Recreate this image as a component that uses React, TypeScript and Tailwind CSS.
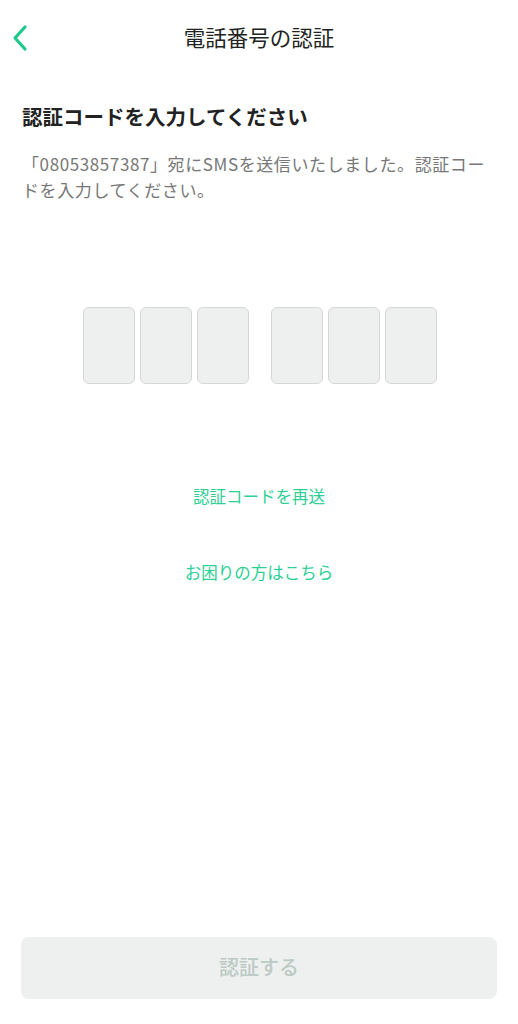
import React from "react";

export default function App() {
  const font = { fontFamily: '"Noto Sans CJK JP", "Noto Sans", sans-serif' };
  const Box = () => (
    <div className="w-[52px] h-[77px] rounded-[6px] border-[1.5px] border-[#d6d8d7] bg-[#eef0ef]" />
  );
  return (
    <div className="w-[518px] h-[1024px] bg-white flex flex-col" style={font}>
      <div className="relative h-[74px] flex items-center justify-center">
        <svg className="absolute left-[11px] top-[24px]" width="18" height="28" viewBox="0 0 18 28" fill="none">
          <path d="M14 3 L4 14 L14 25" stroke="#1fc98b" strokeWidth="3.2" strokeLinecap="round" strokeLinejoin="round" />
        </svg>
        <span className="text-[21.5px] text-[#222] font-normal leading-none">電話番号の認証</span>
      </div>
      <div className="px-[22px] pt-[28px]">
        <h1 className="text-[20.5px] font-bold text-[#222] leading-[28px]">認証コードを入力してください</h1>
        <p className="mt-[21px] text-[17px] leading-[26px] text-[#777] tracking-[0.6px]">
          <span className="block whitespace-nowrap">「08053857387」宛にSMSを送信いたしました。認証コー</span>
          <span className="block whitespace-nowrap">ドを入力してください。</span>
        </p>
      </div>
      <div className="mt-[104px] flex justify-center gap-[22px] pl-[1px]">
        <div className="flex gap-[5px]">
          <Box />
          <Box />
          <Box />
        </div>
        <div className="flex gap-[5px]">
          <Box />
          <Box />
          <Box />
        </div>
      </div>
      <div className="mt-[100px] flex flex-col items-center">
        <span className="text-[16.5px] leading-[24px] text-[#2ccf96]">認証コードを再送</span>
        <span className="mt-[52px] text-[16.5px] leading-[24px] text-[#2ccf96]">お困りの方はこちら</span>
      </div>
      <div className="flex-1" />
      <div className="px-[21px] pb-[25px]">
        <div className="h-[62px] rounded-[8px] bg-[#edf0ef] flex items-center justify-center">
          <span className="text-[20px] font-medium text-[#bcc9c4] -mt-[2px]">認証する</span>
        </div>
      </div>
    </div>
  );
}
